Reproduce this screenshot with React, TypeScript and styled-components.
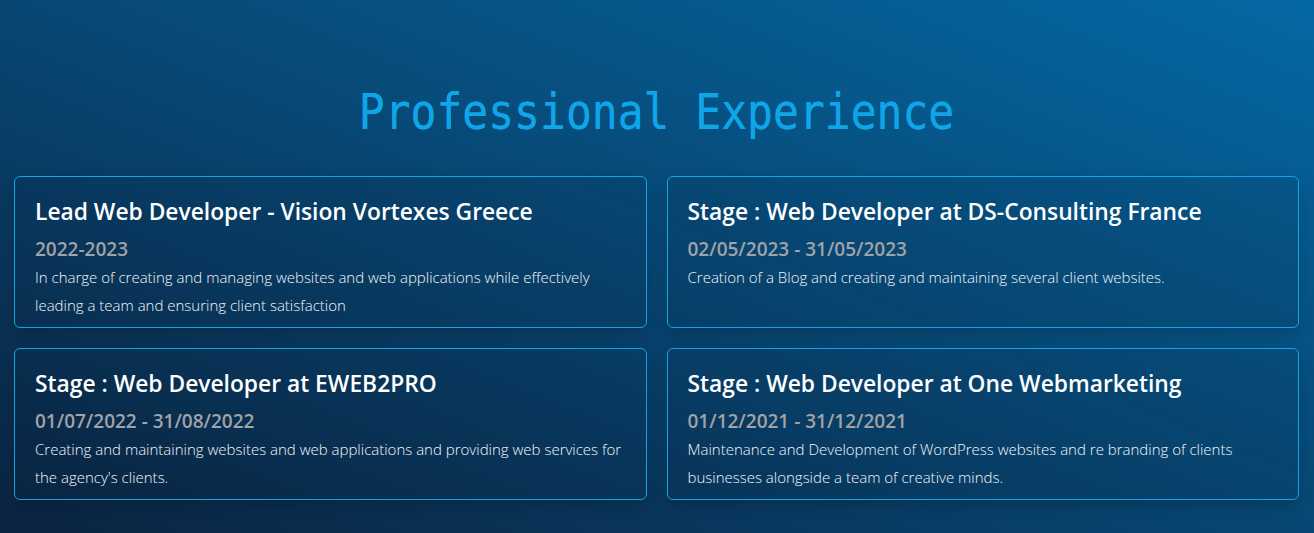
import React from 'react'
import styled, { createGlobalStyle } from 'styled-components'

const GlobalStyle = createGlobalStyle`
  html, body {
    margin: 0;
    padding: 0;
  }
  body {
    font-family: "Open Sans", "Noto Sans", sans-serif;
    background: #0b2340;
  }
`

const Section = styled.section`
  min-height: 533px;
  box-sizing: border-box;
  padding: 84px 15px 34px 14px;
  background: linear-gradient(to top right, #0b2340 0%, #074a78 55%, #0468a3 100%);
`

const Heading = styled.h2`
  margin: 0 0 36px;
  text-align: center;
  font-family: "DejaVu Sans Mono", "Liberation Mono", monospace;
  font-weight: 400;
  font-size: 43px;
  line-height: 56px;
  color: #0ea5e9;
  transform: scaleY(1.14);
  text-shadow: 0 0 0.6px #0ea5e9;
`

const Grid = styled.div`
  display: grid;
  grid-template-columns: 1fr 1fr;
  column-gap: 20px;
  row-gap: 20px;
`

const Card = styled.article`
  min-height: 151px;
  box-sizing: border-box;
  padding: 18px 20px 8px;
  border: 1px solid #0ea5e9;
  border-radius: 6px;
  background: rgba(8, 30, 60, 0.12);
  box-shadow: 0 6px 16px rgba(0, 0, 0, 0.18);
`

const Role = styled.h3`
  margin: 0 0 8px;
  font-size: 22.8px;
  font-weight: 600;
  line-height: 34px;
  color: #ffffff;
`

const Period = styled.div`
  font-size: 19px;
  font-weight: 600;
  line-height: 24px;
  color: #a0a3a7;
`

const Summary = styled.p`
  margin: 2px 0 0;
  font-size: 15px;
  font-weight: 300;
  line-height: 28px;
  color: #f3f6f9;
`

const jobs = [
  {
    role: 'Lead Web Developer - Vision Vortexes Greece',
    period: '2022-2023',
    summary:
      'In charge of creating and managing websites and web applications while effectively leading a team and ensuring client satisfaction',
  },
  {
    role: 'Stage : Web Developer at DS-Consulting France',
    period: '02/05/2023 - 31/05/2023',
    summary: 'Creation of a Blog and creating and maintaining several client websites.',
  },
  {
    role: 'Stage : Web Developer at EWEB2PRO',
    period: '01/07/2022 - 31/08/2022',
    summary:
      "Creating and maintaining websites and web applications and providing web services for the agency's clients.",
  },
  {
    role: 'Stage : Web Developer at One Webmarketing',
    period: '01/12/2021 - 31/12/2021',
    summary:
      'Maintenance and Development of WordPress websites and re branding of clients businesses alongside a team of creative minds.',
  },
]

export default function App() {
  return (
    <>
      <GlobalStyle />
      <Section>
        <Heading>Professional Experience</Heading>
        <Grid>
          {jobs.map((job) => (
            <Card key={job.role}>
              <Role>{job.role}</Role>
              <Period>{job.period}</Period>
              <Summary>{job.summary}</Summary>
            </Card>
          ))}
        </Grid>
      </Section>
    </>
  )
}
